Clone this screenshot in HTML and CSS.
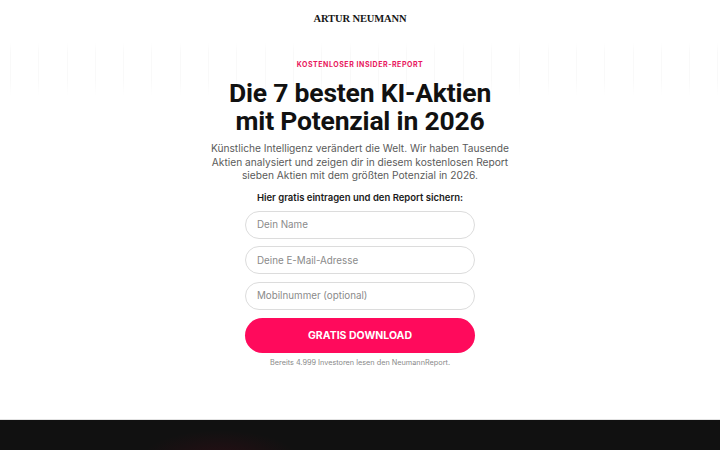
FILE: index.html
```html
<!DOCTYPE html>
<html lang="de">
<head>
<meta charset="utf-8">
<title>Artur Neumann</title>
<link rel="stylesheet" href="styles.css">
</head>
<body>
<header class="topbar">
  <div class="brand">ARTUR NEUMANN</div>
</header>
<main class="hero">
  <div class="grid-bg"></div>
  <div class="content">
    <p class="eyebrow">KOSTENLOSER INSIDER-REPORT</p>
    <h1 class="title">Die 7 besten KI-Aktien<br>mit Potenzial in 2026</h1>
    <p class="lead">Künstliche Intelligenz verändert die Welt. Wir haben Tausende<br>Aktien analysiert und zeigen dir in diesem kostenlosen Report<br>sieben Aktien mit dem größten Potenzial in 2026.</p>
    <p class="cta-label">Hier gratis eintragen und den Report sichern:</p>
    <form class="form">
      <input class="field" type="text" placeholder="Dein Name">
      <input class="field" type="email" placeholder="Deine E-Mail-Adresse">
      <input class="field" type="tel" placeholder="Mobilnummer (optional)">
      <button class="btn" type="button">GRATIS DOWNLOAD</button>
    </form>
    <p class="note">Bereits 4.999 Investoren lesen den NeumannReport.</p>
  </div>
</main>
<section class="dark">
  <div class="glow"></div>
</section>
</body>
</html>
```

FILE: styles.css
```css
* { box-sizing: border-box; }
html, body { margin: 0; padding: 0; }
body {
  background: #fff;
  font-family: Inter, "Noto Sans", sans-serif;
  color: #111;
  overflow: hidden;
}
.topbar {
  height: 36px;
  display: flex;
  align-items: center;
  justify-content: center;
}
.brand {
  font-family: "Liberation Serif", "DejaVu Serif", serif;
  font-weight: 700;
  font-size: 10.5px;
  letter-spacing: -0.1px;
  color: #161616;
}
.hero {
  position: relative;
  height: 384px;
  border-bottom: 1px solid #e2e2e2;
}
.grid-bg {
  position: absolute;
  left: 0; right: 0; top: 6px; height: 54px;
  background-image: repeating-linear-gradient(90deg, transparent 0, transparent 10px, rgba(0,0,0,0.022) 10px, rgba(0,0,0,0.022) 11px, transparent 11px, transparent 28.3px);
  -webkit-mask-image: linear-gradient(180deg, transparent, #000 20%, #000 70%, transparent);
  mask-image: linear-gradient(180deg, transparent, #000 20%, #000 70%, transparent);
}
.content {
  position: relative;
  display: flex;
  flex-direction: column;
  align-items: center;
  text-align: center;
  padding-top: 24px;
}
.eyebrow {
  margin: 0;
  font-size: 7px;
  line-height: 9px;
  font-weight: 700;
  letter-spacing: 0.55px;
  color: #e8175d;
}
.title {
  margin: 10px 0 0;
  font-family: Roboto, Inter, sans-serif;
  font-weight: 700;
  font-size: 26.5px;
  line-height: 28px;
  letter-spacing: -0.2px;
  color: #111;
}
.lead {
  margin: 7px 0 0;
  white-space: nowrap;
  font-size: 10.2px;
  line-height: 13.5px;
  color: #5a5a5a;
}
.cta-label {
  margin: 8px 0 0;
  font-size: 9.5px;
  line-height: 13px;
  font-weight: 600;
  color: #1a1a1a;
}
.form {
  margin-top: 7px;
  width: 230px;
  display: flex;
  flex-direction: column;
  gap: 7.5px;
}
.field {
  height: 28px;
  border: 1px solid #dcdcdc;
  border-radius: 14px;
  padding: 0 11px;
  font-family: Inter, "Noto Sans", sans-serif;
  font-size: 9.8px;
  color: #333;
  background: #fff;
  outline: none;
}
.field::placeholder { color: #8a8a8a; }
.btn {
  margin-top: 0.5px;
  height: 35px;
  border: none;
  border-radius: 18px;
  background: #ff0a5c;
  color: #fff;
  font-family: Inter, "Noto Sans", sans-serif;
  font-weight: 700;
  font-size: 10.5px;
}
.note {
  margin: 5px 0 0;
  font-size: 7.3px;
  line-height: 9px;
  color: #8a8a8a;
}
.dark {
  position: relative;
  height: 30px;
  background: #111111;
  overflow: hidden;
}
.glow {
  position: absolute;
  left: 140px; top: 10px;
  width: 160px; height: 60px;
  border-radius: 50%;
  background: radial-gradient(ellipse at center, rgba(80,10,25,0.35), rgba(17,17,17,0) 70%);
}
```
